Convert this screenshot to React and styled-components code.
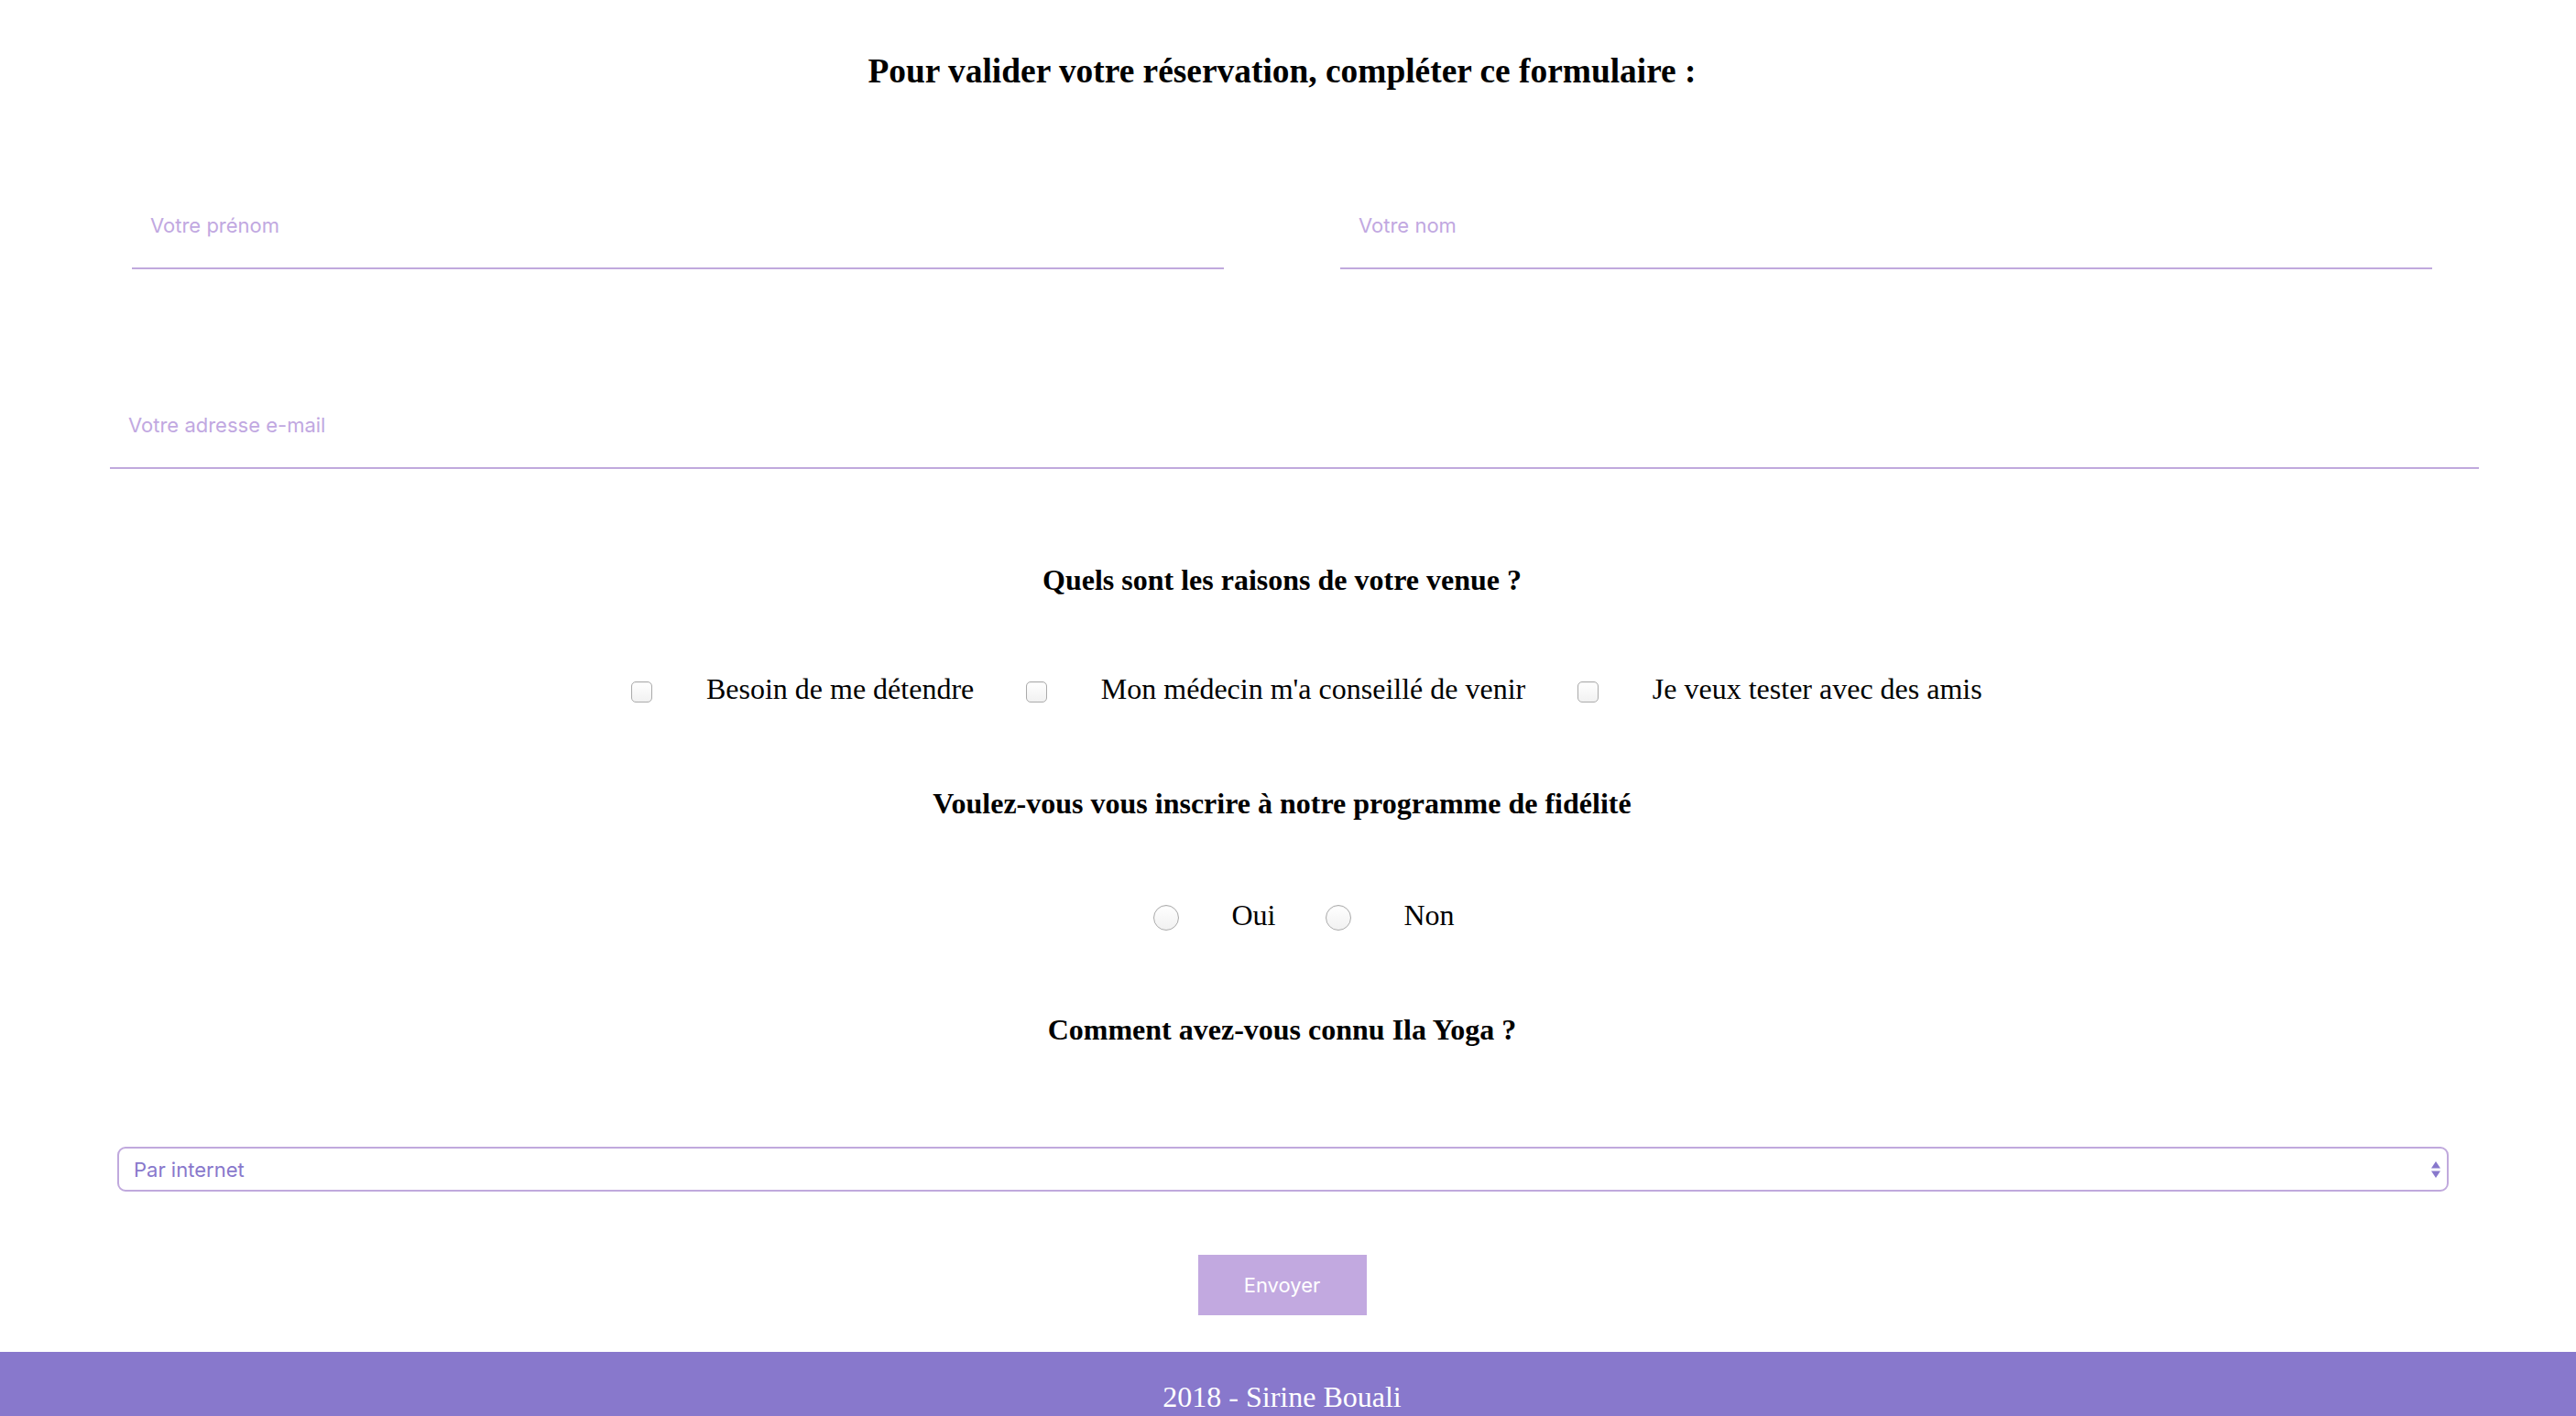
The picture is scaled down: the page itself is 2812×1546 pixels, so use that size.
import React from "react";
import styled, { createGlobalStyle } from "styled-components";

const GlobalStyle = createGlobalStyle`
  html, body { margin: 0; padding: 0; background: #ffffff; }
  body { font-family: "Liberation Serif", "Times New Roman", serif; color: #000; }
  * { box-sizing: border-box; }
`;

const lavender = "#c0a9dd";
const violet = "#8878cc";

const Main = styled.main`
  padding: 56px 13px 0 0;
  display: flex;
  flex-direction: column;
`;

const Title = styled.h3`
  margin: 0;
  font-family: "Liberation Serif", "Times New Roman", serif;
  font-weight: 700;
  font-size: 37.4px;
  line-height: 43px;
  text-align: center;
`;

const Form = styled.form`
  display: flex;
  flex-direction: column;
`;

const NameRow = styled.div`
  margin-top: 101px;
  display: flex;
  justify-content: center;
  gap: 127px;
`;

const TextInput = styled.input`
  display: block;
  width: ${(p) => p.$width}px;
  height: 94px;
  margin: ${(p) => p.$margin || "0"};
  padding: 0 20px;
  border: none;
  border-bottom: 2px solid ${lavender};
  outline: none;
  background: transparent;
  font-family: Inter, "Liberation Sans", sans-serif;
  font-size: 22px;
  color: ${violet};
  &::placeholder { color: #c1a8e1; opacity: 1; }
`;

const Question = styled.h4`
  margin: ${(p) => p.$top}px 0 0;
  font-family: "Liberation Serif", "Times New Roman", serif;
  font-weight: 700;
  font-size: 32px;
  line-height: 37px;
  text-align: center;
`;

const ChoiceRow = styled.div`
  margin-top: ${(p) => p.$top}px;
  padding-left: ${(p) => p.$shift}px;
  display: flex;
  justify-content: center;
  align-items: center;
  gap: ${(p) => p.$gap}px;
`;

const Choice = styled.label`
  display: flex;
  align-items: center;
  font-family: "Liberation Serif", "Times New Roman", serif;
  font-size: 32px;
  line-height: 37px;
  white-space: nowrap;
`;

const Box = styled.input`
  appearance: none;
  -webkit-appearance: none;
  margin: ${(p) => p.$offset}px ${(p) => p.$space}px 0 0;
  width: ${(p) => p.$size}px;
  height: ${(p) => p.$size}px;
  flex: none;
  border: 1.5px solid #ababab;
  border-radius: ${(p) => (p.type === "radio" ? "50%" : "5px")};
  background: linear-gradient(#ffffff, #f1f1f1);
  box-shadow: inset 0 1px 1px rgba(0, 0, 0, 0.06);
`;

const SelectWrap = styled.div`
  position: relative;
  margin: 109px 126px 0 128px;
  height: 49px;
`;

const Select = styled.select`
  appearance: none;
  -webkit-appearance: none;
  display: block;
  width: 100%;
  height: 49px;
  padding: 0 40px 0 16px;
  border: 2px solid ${lavender};
  border-radius: 9px;
  background: #ffffff;
  font-family: Inter, "Liberation Sans", sans-serif;
  font-size: 22px;
  color: ${violet};
  outline: none;
`;

const Arrows = styled.svg`
  position: absolute;
  right: 8px;
  top: 50%;
  transform: translateY(-50%);
  pointer-events: none;
`;

const Submit = styled.button`
  align-self: center;
  margin: 69px 0 0;
  width: 184px;
  height: 66px;
  border: none;
  background: #c2a9e0;
  color: #ffffff;
  font-family: Inter, "Liberation Sans", sans-serif;
  font-size: 22px;
  cursor: pointer;
`;

const Footer = styled.footer`
  margin-top: 40px;
  background: ${violet};
  padding: 31px 0 32px;
  text-align: center;
`;

const FooterText = styled.p`
  margin: 0;
  padding-right: 13px;
  font-family: "Liberation Serif", "Times New Roman", serif;
  font-size: 32px;
  line-height: 37px;
  color: #ffffff;
`;

const reasons = [
  "Besoin de me détendre",
  "Mon médecin m'a conseillé de venir",
  "Je veux tester avec des amis",
];

export default function App() {
  return (
    <>
      <GlobalStyle />
      <Main>
        <Title>Pour valider votre réservation, compléter ce formulaire :</Title>
        <Form onSubmit={(e) => e.preventDefault()}>
          <NameRow>
            <TextInput $width={1192} type="text" placeholder="Votre prénom" />
            <TextInput $width={1192} type="text" placeholder="Votre nom" />
          </NameRow>
          <TextInput
            $width={2586}
            $margin="124px 0 0 120px"
            type="email"
            placeholder="Votre adresse e-mail"
          />

          <Question $top={103}>Quels sont les raisons de votre venue ?</Question>
          <ChoiceRow $top={82} $shift={54} $gap={57}>
            {reasons.map((r) => (
              <Choice key={r}>
                <Box type="checkbox" $size={22.6} $space={59} $offset={6} />
                {r}
              </Choice>
            ))}
          </ChoiceRow>

          <Question $top={88}>Voulez-vous vous inscrire à notre programme de fidélité</Question>
          <ChoiceRow $top={85} $shift={48} $gap={55}>
            <Choice>
              <Box type="radio" name="fidelite" $size={28} $space={57} $offset={4} />
              Oui
            </Choice>
            <Choice>
              <Box type="radio" name="fidelite" $size={28} $space={57} $offset={4} />
              Non
            </Choice>
          </ChoiceRow>

          <Question $top={88}>Comment avez-vous connu Ila Yoga ?</Question>
          <SelectWrap>
            <Select defaultValue="internet">
              <option value="internet">Par internet</option>
              <option value="ami">Par un ami</option>
              <option value="autre">Autre</option>
            </Select>
            <Arrows width="12" height="22" viewBox="0 0 12 22">
              <path d="M6 2 L11 9.5 L1 9.5 Z" fill={violet} />
              <path d="M6 20 L11 12.5 L1 12.5 Z" fill={violet} />
            </Arrows>
          </SelectWrap>

          <Submit type="submit">Envoyer</Submit>
        </Form>
      </Main>
      <Footer>
        <FooterText>2018 - Sirine Bouali</FooterText>
      </Footer>
    </>
  );
}
